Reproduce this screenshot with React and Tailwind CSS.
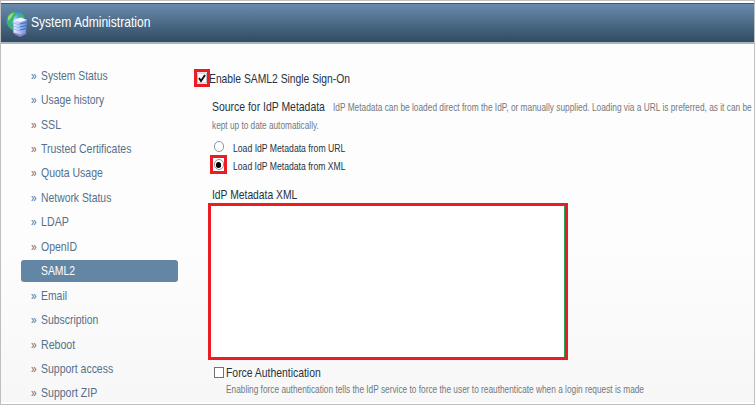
import { useLayoutEffect, useRef, useState } from "react";

// Single line of condensed text, squeezed horizontally to a given width.
function Fit({ w, className = "", children }) {
  const ref = useRef(null);
  const [scale, setScale] = useState(1);
  useLayoutEffect(() => {
    setScale(w / ref.current.offsetWidth);
  }, [w]);
  return (
    <span className={"block shrink-0 " + className} style={{ width: w }}>
      <span
        ref={ref}
        className="inline-block origin-left whitespace-nowrap"
        style={{ transform: `scaleX(${scale})` }}
      >
        {children}
      </span>
    </span>
  );
}

const items = [
  ["System Status", 67],
  ["Usage history", 63],
  ["SSL", 20],
  ["Trusted Certificates", 90],
  ["Quota Usage", 61.5],
  ["Network Status", 70.5],
  ["LDAP", 27.5],
  ["OpenID", 36],
  ["SAML2", 34],
  ["Email", 26],
  ["Subscription", 57],
  ["Reboot", 34],
  ["Support access", 72],
  ["Support ZIP", 56],
];

function Logo() {
  return (
    <svg viewBox="0 0 24 28" className="mt-[2px] h-7 w-6 shrink-0">
      <defs>
        <radialGradient id="globe" cx="40%" cy="35%" r="65%">
          <stop offset="0" stopColor="#8fd0f4" />
          <stop offset="0.6" stopColor="#3485cf" />
          <stop offset="1" stopColor="#205b9e" />
        </radialGradient>
        <linearGradient id="server" x1="0" x2="1">
          <stop offset="0" stopColor="#e5eeff" />
          <stop offset="0.5" stopColor="#a5b9ef" />
          <stop offset="1" stopColor="#7185ca" />
        </linearGradient>
      </defs>
      <circle cx="11.2" cy="11.5" r="10" fill="url(#globe)" />
      <path d="M3 6Q6 1.5 10 2l2 2-3 3-1 4-3 1 3 4 1 5Q3 18 1.5 12ZM14 2q5 2 6 6l-3 1-3-3Z" fill="#3fb563" />
      <path d="M3 7q3-4 6-4l-3 5-3 3Z" fill="#94db85" />
      <path d="M8.5 10 16 7.5l6 2.5-1 13-6 3-6.5-3Z" fill="url(#server)" />
      <path d="M8.5 10 16 7.5l6 2.5-7 2Z" fill="#f1f4ff" />
      <path d="m15 14 6.5-1.5M15 17l6.5-1.5M15 20l6-1.5" stroke="#2978c6" strokeWidth="1.2" />
      <path d="m8.5 13 6.5 2m-6.5 1 6.5 2m-6.5 1 6.5 2" stroke="#8aa6e5" strokeWidth=".7" />
      <path d="m9 22.500 6 2 6-2v1.500l-6 3-6-3Z" fill="#8d82bd" />
    </svg>
  );
}

export default function App() {
  return (
    <div className="flex h-[405px] w-[755px] flex-col overflow-hidden border border-[#bfbfc1] bg-white font-['Liberation_Sans',Arial,sans-serif]">
      <header className="mt-[2px] flex h-[41px] shrink-0 items-center border-t border-b-2 border-t-[#3c5570] border-b-[#a9b6c3] bg-linear-to-b from-[#688bad] to-[#314c62] pl-[3.500px]">
        <Logo />
        <Fit w={119} className="mb-[2px] ml-[2.500px] text-[14.5px] leading-5 text-white">System Administration</Fit>
      </header>

      <div className="mb-[2px] flex min-h-0 flex-1 bg-linear-to-b from-[#fdfdfd] from-55% to-[#f7f7f7]">
        <nav className="w-[170px] shrink-0 pt-[19.5px] pl-5 text-[12.8px] text-[#557089]">
          {items.map(([label, w]) =>
            label === "SAML2" ? (
              <div key={label} className="flex h-[24.450px] w-[157px] items-center">
                <div className="flex h-[22px] w-full items-center rounded-[3px] bg-[#6486a5] pl-[19.500px] text-white">
                  <Fit w={w} className="leading-4">{label}</Fit>
                </div>
              </div>
            ) : (
              <div key={label} className="flex h-[24.450px] items-center pl-[9.5px] leading-4">
                <Fit w={5.5} className="mr-[4.500px]">»</Fit>
                <Fit w={w}>{label}</Fit>
              </div>
            )
          )}
        </nav>

        <main className="flex min-w-0 flex-1 flex-col pt-[25px] pl-[23px] text-[12.8px] leading-5 text-[#26333f]">
          <div className="flex h-[18px] shrink-0 items-center">
            <span className="flex h-[18px] w-4 shrink-0 items-center justify-center border-[3px] border-[#ec1c24] bg-white">
              <svg viewBox="0 0 10 12" className="h-3 w-[10px]">
                <path d="M.5 1v10h9V1Z" fill="#fff" stroke="#a4a8aa" strokeWidth=".7" />
                <path d="m2 6 2 3 4-6" fill="none" stroke="#111" strokeWidth="1.900" />
              </svg>
            </span>
            <Fit w={141} className="mt-[2px] -ml-px">Enable SAML2 Single Sign-On</Fit>
          </div>

          <div className="mt-[10px] flex h-5 shrink-0 items-center pl-[18px]">
            <Fit w={112.5}>Source for IdP Metadata</Fit>
            <Fit w={418.5} className="ml-2 text-[11.500px] text-[#72797f]">
              IdP Metadata can be loaded direct from the IdP, or manually supplied. Loading via a URL is preferred, as it can be
            </Fit>
          </div>
          <Fit w={107} className="-mt-px ml-[18px] h-[18px] text-[11.500px] leading-[18px] text-[#72797f]">
            kept up to date automatically.
          </Fit>

          <div className="mt-[3px] flex h-[18px] shrink-0 items-center pl-5 text-[11.500px]">
            <span className="h-[11px] w-[10px] shrink-0 rounded-full border border-[#8d9499] bg-white" />
            <Fit w={112} className="mt-[3px] ml-[9px]">Load IdP Metadata from URL</Fit>
          </div>
          <div className="flex h-[19px] shrink-0 items-center pl-4 text-[11.500px]">
            <span className="flex h-[19px] w-[17px] shrink-0 items-center justify-center border-[3px] border-[#ec1c24] bg-white">
              <span className="flex h-[11px] w-[10px] items-center justify-center rounded-full border border-[#8d9499]">
                <span className="h-[6px] w-[5px] rounded-full bg-black" />
              </span>
            </span>
            <Fit w={112.5} className="mt-[3px] ml-[6px]">Load IdP Metadata from XML</Fit>
          </div>

          <Fit w={85.5} className="mt-[11px] ml-[18px] h-5">IdP Metadata XML</Fit>
          <div className="-mt-[2px] ml-[14px] h-[157px] w-[360px] shrink-0 border-[3px] border-[#ec1c24] bg-white">
            <div className="h-full border-r border-[#22a75a]" />
          </div>

          <div className="mt-[2px] flex h-5 shrink-0 items-center pl-5">
            <span className="h-[11px] w-[10px] shrink-0 border border-[#6e7478] bg-white" />
            <Fit w={95} className="mt-[2px] ml-[2px]">Force Authentication</Fit>
          </div>
          <Fit w={418} className="ml-8 h-[14px] text-[11.500px] leading-[14px] text-[#72797f]">
            Enabling force authentication tells the IdP service to force the user to reauthenticate when a login request is made
          </Fit>
        </main>
      </div>
    </div>
  );
}
